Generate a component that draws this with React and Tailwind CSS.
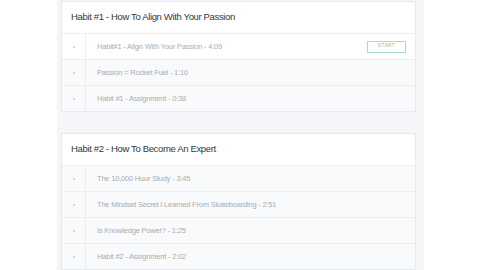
import React from "react";

const sections = [
  {
    title: "Habit #1 - How To Align With Your Passion",
    rows: [
      { t: "Habit#1 - Align With Your Passion - 4:09", current: true },
      { t: "Passion = Rocket Fuel - 1:10" },
      { t: "Habit #1 - Assignment - 0:38" },
    ],
  },
  {
    title: "Habit #2 - How To Become An Expert",
    rows: [
      { t: "The 10,000 Hour Study - 3:45" },
      { t: "The Mindset Secret I Learned From Skateboarding - 2:51" },
      { t: "Is Knowledge Power? - 1:25" },
      { t: "Habit #2 - Assignment - 2:02" },
    ],
  },
];

function Row({ t, current }) {
  return (
    <div
      className={`flex h-[26px] items-stretch border-t border-[#eceef1] ${
        current ? "bg-white" : "bg-[#f9fafb]"
      }`}
    >
      <div className="flex w-[24px] shrink-0 items-center justify-center border-r border-[#eceef1]">
        <div className="h-[2px] w-[2px] rounded-full bg-[#c4c7cb]" />
      </div>
      <div className="flex flex-1 items-center justify-between pl-[11px] pr-[9px]">
        <span className="text-[7.5px] tracking-[-0.2px] text-[#a9adb2]">{t}</span>
        {current && (
          <span className="flex h-[12px] w-[39px] items-center justify-center border border-[#a8dcbf] text-[4.5px] tracking-[0.6px] text-[#6cc596]">
            START
          </span>
        )}
      </div>
    </div>
  );
}

export default function App() {
  return (
    <div
      className="h-[270px] w-[480px] overflow-hidden bg-white"
      style={{ fontFamily: '"Liberation Sans", Arial, sans-serif' }}
    >
      <div className="ml-[57px] flex h-[270px] w-[367px] flex-col gap-[21px] bg-[#f4f6f9] pl-[4px] pr-[8px] pt-[1px]">
        {sections.map((s, i) => (
          <div
            key={i}
            className="w-[355px] shrink-0 border border-[#e7eaee] bg-white shadow-[0_0_2px_rgba(0,0,0,0.03)]"
          >
            <div className="flex h-[31px] items-center bg-white pl-[9px]">
              <span className="text-[9.5px] tracking-[-0.35px] text-[#34383d]">{s.title}</span>
            </div>
            {s.rows.map((r, j) => (
              <Row key={j} {...r} />
            ))}
          </div>
        ))}
      </div>
    </div>
  );
}
